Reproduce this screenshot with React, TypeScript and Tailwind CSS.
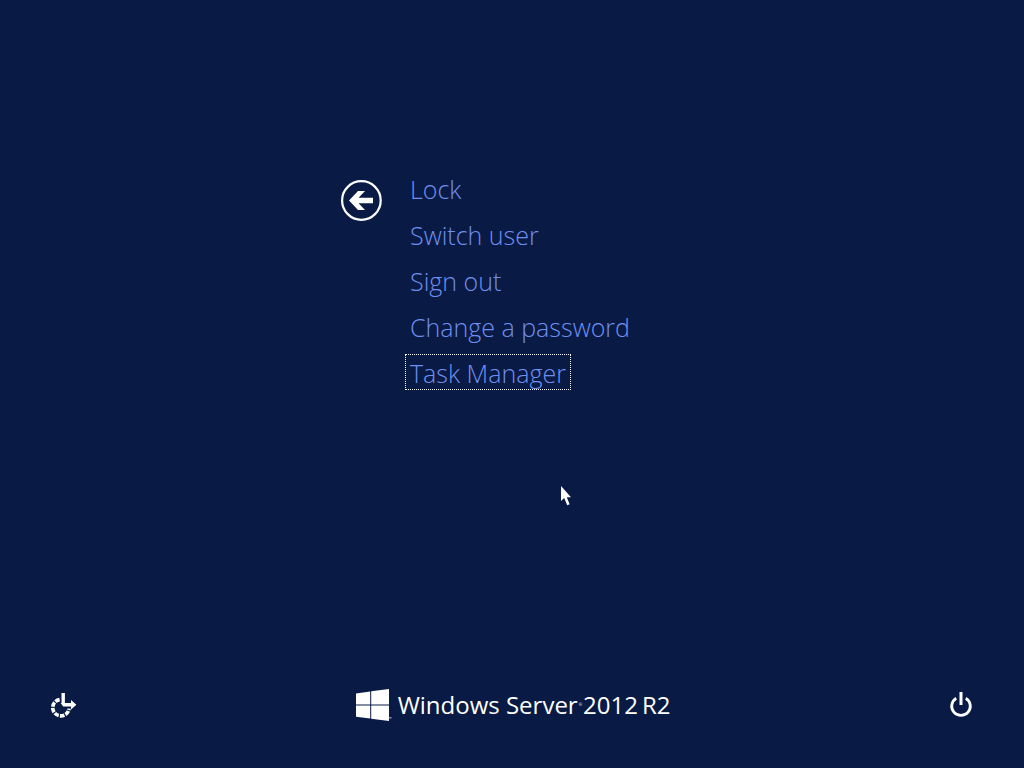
type ActionLinkProps = {
  label: string
  focused?: boolean
}

const actions = ['Lock', 'Switch user', 'Sign out', 'Change a password', 'Task Manager']

const ActionLink = ({ label, focused }: ActionLinkProps) => {
  return (
    <button
      className={
        focused
          ? 'h-9 px-1 border border-dotted border-white text-left whitespace-nowrap'
          : 'h-9 px-1 border border-transparent text-left whitespace-nowrap'
      }
    >
      {label}
    </button>
  )
}

const BackIcon = () => (
  <svg className="size-[42px]" viewBox="0 0 42 42" aria-hidden="true">
    <circle cx="21.4" cy="20.5" r="19.3" fill="none" stroke="#fff" strokeWidth="2.2" />
    <path d="M9 20.5 18 11H25L18.6 17.8H33V23.2H18.6L25 30H18Z" fill="#fff" />
  </svg>
)

const EaseOfAccessIcon = () => (
  <svg className="w-[27px] h-[26px]" viewBox="0 0 27 26" fill="none" aria-hidden="true">
    <path
      d="M9.6 7.6A8.2 8.2 0 1 0 19.1 16.6"
      stroke="#fff"
      strokeWidth="3.6"
      strokeDasharray="4.6 1.2"
    />
    <path d="M13.2 1V12" stroke="#fff" strokeWidth="3.4" />
    <path d="M10.6 11H21V8L26.4 12.8 21 17.6V14.4H13.2Z" fill="#fff" />
  </svg>
)

const PowerIcon = () => (
  <svg className="w-6 h-[27px]" viewBox="0 0 24 27" fill="none" stroke="#fff" aria-hidden="true">
    <path d="M7.2 6.2A9.3 9.3 0 1 0 16.8 6.2" strokeWidth="2.8" />
    <path d="M12 0V13" strokeWidth="3" />
  </svg>
)

const WindowsLogo = () => (
  <svg className="w-[33px] h-8" viewBox="0 0 33 32" fill="#fff" aria-hidden="true">
    <path d="M0 4.4 14.2 2.5V15.6H0ZM15.2 2.3 33 0V15.6H15.2ZM0 16.6H14.2V29.6L0 27.8ZM15.2 16.6H33V32L15.2 29.8Z" />
  </svg>
)

const Pointer = () => (
  <svg className="absolute left-[560px] top-[485px] w-3 h-[22px]" viewBox="0 0 12 22" aria-hidden="true">
    <path d="M1 1V16L4.2 13L7.2 20.2L9.6 19.2L6.8 12.2H11Z" fill="#fff" />
  </svg>
)

const App = () => {
  return (
    <div className="relative min-h-screen flex flex-col bg-[#091a44] text-white font-['Open_Sans',sans-serif]">
      <main className="flex-1 pt-[170px]">
        <div className="flex items-start gap-[23px] w-[344px] mx-auto">
          <button className="mt-[10px] shrink-0" aria-label="Back">
            <BackIcon />
          </button>
          <nav className="flex flex-col items-start gap-[10px] text-[25px] leading-9 font-light text-[#6f8ff0]">
            {actions.map((label) => (
              <ActionLink key={label} label={label} focused={label === 'Task Manager'} />
            ))}
          </nav>
        </div>
      </main>

      <footer className="flex items-center justify-between pl-[50px] pr-[51px] pb-[47px]">
        <button aria-label="Ease of access">
          <EaseOfAccessIcon />
        </button>
        <div className="flex items-center">
          <WindowsLogo />
          <span className="self-end text-[4px] leading-none">™</span>
          <span className="ml-[6px] text-2xl leading-8 whitespace-nowrap">
            Windows Server
          </span>
          <span className="mx-px text-[4px] leading-none">®</span>
          <span className="flex gap-1 text-2xl leading-8 whitespace-nowrap">
            <span>2012</span>
            <span>R2</span>
          </span>
        </div>
        <button aria-label="Power">
          <PowerIcon />
        </button>
      </footer>

      <Pointer />
    </div>
  )
}

export default App
